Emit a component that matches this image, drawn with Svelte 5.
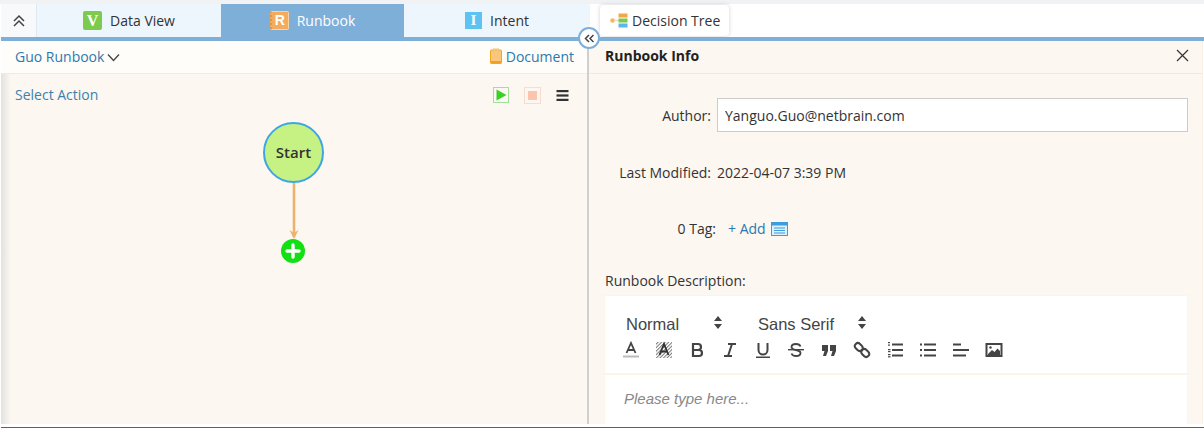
<script>
    const tabs = [
        { name: 'Data View', letter: 'V', kind: 'view', active: false },
        { name: 'Runbook', letter: 'R', kind: 'book', active: true },
        { name: 'Intent', letter: 'I', kind: 'intent', active: false },
    ];
</script>

<div class="page">
    <div class="topstrip"></div>
    <div class="tabbar">
        <div class="tabs-left">
            <button class="collapse" aria-label="collapse">
                <svg width="14" height="14" viewBox="0 0 14 14" fill="none" stroke="#444" stroke-width="1.5"><path d="M2 7l5-5 5 5M2 12l5-5 5 5" /></svg>
            </button>
            {#each tabs as tab}
                <div class="tab" class:active={tab.active}>
                    <span class="tab-icon {tab.kind}">{tab.letter}</span>
                    <span>{tab.name}</span>
                </div>
            {/each}
        </div>
        <div class="tabs-right">
            <div class="dtree">
                <svg width="18" height="15" viewBox="0 0 18 15">
                    <circle cx="2.500" cy="7.500" r="2.200" fill="#f8b45c" />
                    <path d="M5 7.500h4" stroke="#ddd" stroke-width="1.500" />
                    <rect x="8.500" y="0.500" width="9" height="4" fill="#f4a64a" />
                    <rect x="8.500" y="5.500" width="9" height="4" fill="#7ccb4c" />
                    <rect x="8.500" y="10.500" width="9" height="4" fill="#5cb6f0" />
                </svg>
                <span>Decision Tree</span>
            </div>
        </div>
    </div>

    <div class="body">
        <div class="left">
            <div class="left-head">
                <span class="rb-name">Guo Runbook</span>
                <svg class="chev" width="13" height="9" viewBox="0 0 13 9" fill="none" stroke="#444" stroke-width="1.3"><path d="M1 1.500l5.500 6 5.500-6" /></svg>
                <span class="doc">
                    <svg width="12" height="16" viewBox="0 0 12 16">
                        <rect x="0.500" y="2" width="11" height="13.500" rx="1" fill="#f8c77c" stroke="#f5a623" />
                        <rect x="3" y="0.500" width="6" height="3" fill="#f5c27a" />
                        <rect x="0.500" y="13" width="11" height="2.500" fill="#f5a020" />
                    </svg>
                    Document
                </span>
            </div>
            <div class="action-row">
                <span class="select-action">Select Action</span>
                <div class="actions">
                    <span class="play"><svg width="12" height="12" viewBox="0 0 12 12"><path d="M1.500 0.500L11.500 6 1.500 11.500z" fill="#3ccf2a" /></svg></span>
                    <span class="stop"><span></span></span>
                    <svg width="13" height="11" viewBox="0 0 13 11" fill="#333"><rect width="12" height="2.200" x="0.500" /><rect width="12" height="2.200" x="0.500" y="4.400" /><rect width="12" height="2.200" x="0.500" y="8.800" /></svg>
                </div>
            </div>
            <div class="canvas">
                <div class="start">Start</div>
                <svg class="link" width="12" height="57" viewBox="0 0 12 57">
                    <path d="M6 0V54" stroke="#edb36c" stroke-width="2.600" fill="none" />
                    <path d="M1.500 47L6 56 10.500 47 6 50z" fill="#edb36c" />
                </svg>
                <svg class="plus" width="24" height="24" viewBox="0 0 24 24">
                    <circle cx="12" cy="12" r="12" fill="#12e012" />
                    <path d="M12 6v12M6 12h12" stroke="#fff" stroke-width="3.400" stroke-linecap="round" />
                </svg>
            </div>
        </div>

        <div class="right">
            <div class="right-head">
                <span class="info-title">Runbook Info</span>
                <svg width="13" height="13" viewBox="0 0 13 13" stroke="#333" stroke-width="1.200"><path d="M1 1l11 11M12 1L1 12" /></svg>
            </div>
            <div class="form">
                <div class="row author">
                    <span class="lbl">Author:</span>
                    <input class="author-input" value="Yanguo.Guo@netbrain.com" />
                </div>
                <div class="row modified">
                    <span class="lbl">Last Modified:</span>
                    <span>2022-04-07 3:39 PM</span>
                </div>
                <div class="row tag">
                    <span class="lbl">0 Tag:</span>
                    <span class="add">+ Add</span>
                    <svg width="17" height="14" viewBox="0 0 17 14">
                        <rect x="0.500" y="0.500" width="16" height="13" fill="#dff0fb" stroke="#3d9be0" />
                        <rect x="0.500" y="0.500" width="16" height="3" fill="#3d9be0" />
                        <path d="M3 6h11M3 8.500h11M3 11h11" stroke="#3d9be0" stroke-width="1.200" />
                    </svg>
                </div>
                <div class="desc-label">Runbook Description:</div>
            </div>
            <div class="editor">
                <div class="toolbar">
                    <div class="selects">
                        <span class="sel sel-a">Normal</span>
                        <svg class="updown" width="8" height="13" viewBox="0 0 8 13" fill="#444"><path d="M4 0L8 5H0zM4 13L0 8h8z" /></svg>
                        <span class="sel sel-b">Sans Serif</span>
                        <svg class="updown" width="8" height="13" viewBox="0 0 8 13" fill="#444"><path d="M4 0L8 5H0zM4 13L0 8h8z" /></svg>
                    </div>
                    <div class="tools">
                        <svg width="18" height="18" viewBox="0 0 18 18"><path d="M4.500 12L9 2l4.500 10M6 9h6" fill="none" stroke="#444" stroke-width="1.800" /><rect x="1" y="14.500" width="16" height="2" fill="#bbb" /></svg>
                        <svg width="18" height="18" viewBox="0 0 18 18"><defs><pattern id="hatch" width="2.500" height="2.500" patternUnits="userSpaceOnUse" patternTransform="rotate(45)"><rect width="1" height="2.500" fill="#777" /></pattern></defs><rect x="1" y="1" width="16" height="16" fill="url(#hatch)" /><path d="M4.500 14L9 3l4.500 11M6 10.500h6" fill="none" stroke="#333" stroke-width="1.800" /></svg>
                        <svg width="18" height="18" viewBox="0 0 18 18"><path d="M5 3h5a3 3 0 0 1 0 6H5zM5 9h6a3 3 0 0 1 0 6H5z" fill="none" stroke="#444" stroke-width="2.200" /></svg>
                        <svg width="18" height="18" viewBox="0 0 18 18"><path d="M7 3h8M3 15h8M11 3L7 15" fill="none" stroke="#444" stroke-width="2" /></svg>
                        <svg width="18" height="18" viewBox="0 0 18 18"><path d="M4.500 2v7a4.500 4.500 0 0 0 9 0V2" fill="none" stroke="#444" stroke-width="2" /><rect x="2" y="15.500" width="14" height="1.500" fill="#444" /></svg>
                        <svg width="18" height="18" viewBox="0 0 18 18"><path d="M13.500 5.500C13 4 11 3 9 3 6.500 3 4.500 4.200 4.500 6c0 4 9 2 9 6 0 1.800-2 3-4.500 3-2 0-4-1-4.500-2.500" fill="none" stroke="#444" stroke-width="1.800" /><rect x="1" y="8" width="16" height="1.400" fill="#444" /></svg>
                        <svg width="18" height="18" viewBox="0 0 18 18" fill="#444"><path d="M2 4h6v6l-2 5H3l1.500-5H2zM10 4h6v6l-2 5h-3l1.500-5H10z" /></svg>
                        <svg width="18" height="18" viewBox="0 0 18 18" fill="none" stroke="#444" stroke-width="2"><rect x="1.500" y="3" width="8.500" height="6" rx="3" transform="rotate(45 5.750 6)" /><rect x="8" y="9" width="8.500" height="6" rx="3" transform="rotate(45 12.250 12)" /></svg>
                        <svg width="18" height="18" viewBox="0 0 18 18" fill="#444"><rect x="6" y="2.500" width="11" height="2" /><rect x="6" y="8" width="11" height="2" /><rect x="6" y="13.500" width="11" height="2" /><rect x="2" y="1" width="2" height="1.200" /><rect x="2" y="3.500" width="2" height="1.200" /><rect x="2" y="8" width="2.500" height="1.200" /><rect x="2" y="10" width="2.500" height="1.200" /><rect x="2" y="13" width="2.500" height="1.200" /><rect x="2" y="15.200" width="2.500" height="1.200" /></svg>
                        <svg width="18" height="18" viewBox="0 0 18 18" fill="#444"><rect x="5" y="2.500" width="12" height="2" /><rect x="5" y="8" width="12" height="2" /><rect x="5" y="13.500" width="12" height="2" /><rect x="1" y="2.500" width="2" height="2" /><rect x="1" y="8" width="2" height="2" /><rect x="1" y="13.500" width="2" height="2" /></svg>
                        <svg width="18" height="18" viewBox="0 0 18 18" fill="#444"><rect x="1" y="2.500" width="8" height="2" /><rect x="1" y="8" width="16" height="2" /><rect x="1" y="13.500" width="13" height="2" /></svg>
                        <svg width="18" height="18" viewBox="0 0 18 18"><rect x="1.500" y="3" width="15" height="12" fill="#fff" stroke="#444" stroke-width="2" /><path d="M3 13l4-4 2.500 2 3-3.500L15 10v4H3z" fill="#444" /><circle cx="5.500" cy="6.500" r="1.200" fill="#444" /></svg>
                    </div>
                </div>
                <div class="editor-body">Please type here...</div>
            </div>
        </div>

        <button class="fold" aria-label="fold">
            <svg width="11" height="9" viewBox="0 0 11 9" fill="none" stroke="#444" stroke-width="1.500"><path d="M5 1L1.500 4.500 5 8M9.500 1L6 4.500 9.500 8" /></svg>
        </button>
    </div>
    <div class="bottom-line"></div>
</div>

<style>
    :global(body) {
        margin: 0;
        background: #fff;
        font-family: "Open Sans", "Noto Sans", sans-serif;
        font-size: 14px;
        color: #333;
    }

    .page {
        width: 1204px;
        height: 430px;
        overflow: hidden;
    }

    .topstrip {
        height: 4px;
        background: #f0f2f4;
    }

    .tabbar {
        display: grid;
        grid-template-columns: 589px 1fr;
        height: 33px;
        padding-left: 1px;
    }

    .tabs-left {
        display: grid;
        grid-template-columns: 36px 184px 183px 1fr;
    }

    .collapse {
        display: flex;
        align-items: center;
        justify-content: center;
        border: none;
        border-right: 1px solid #dfe9f2;
        background: #f8f9fa;
        padding: 0;
    }

    .tab {
        display: flex;
        align-items: center;
        justify-content: center;
        gap: 8px;
        background: #edf5fd;
        color: #333;
    }

    .tab.active {
        background: #7eafd9;
        color: #fff;
    }

    .tab-icon {
        width: 19px;
        height: 19px;
        border-radius: 2px;
        color: #fff;
        text-align: center;
    }

    .tab-icon.view {
        background: #7ccb4c;
        font: bold 16px/19px "Liberation Serif", serif;
    }

    .tab-icon.book {
        background: #f4ac5c;
        border: 1px solid #fbd3a3;
        border-left: 2px dotted #d9974e;
        box-sizing: border-box;
        font: bold 14px/17px "Liberation Sans", sans-serif;
    }

    .tab-icon.intent {
        width: 17px;
        height: 17px;
        border-radius: 0;
        background: #5cc3f3;
        font: bold 15px/17px "Liberation Serif", serif;
    }

    .tabs-right {
        padding: 1px 0 1px 10px;
    }

    .dtree {
        display: inline-flex;
        align-items: center;
        gap: 4px;
        height: 31px;
        width: 129px;
        box-sizing: border-box;
        padding-left: 10px;
        background: #fff;
        border-radius: 4px;
        box-shadow: 0 0 4px rgba(0, 0, 0, 0.18);
        color: #333;
    }

    .body {
        position: relative;
        display: grid;
        grid-template-columns: 588px 1fr;
        height: 383px;
        border-top: 4px solid #7eafd9;
        margin-left: 1px;
    }

    .left {
        background: #fcf7f1;
        border-right: 2px solid #cfcfcf;
        display: flex;
        flex-direction: column;
        background-image: linear-gradient(90deg, #e4e2df, #fcf7f1 10px);
        width: 586px;
    }

    .left-head {
        display: flex;
        align-items: center;
        flex: none;
        padding: 0 13px 2px 14px;
        height: 30px;
        background: #fffdf9;
        border-bottom: 1px solid #fbe6cf;
        color: #2a7ab0;
    }

    .chev {
        margin: 3px 0 0 3px;
    }

    .doc {
        margin-left: auto;
        display: flex;
        align-items: center;
        gap: 4px;
    }

    .action-row {
        display: flex;
        align-items: center;
        justify-content: space-between;
        padding: 11px 18px 0 14px;
        color: #3b82b0;
    }

    .select-action {
        line-height: 20px;
    }

    .actions {
        display: flex;
        align-items: center;
        gap: 15px;
    }

    .play {
        display: flex;
        align-items: center;
        justify-content: center;
        width: 14px;
        height: 14px;
        border: 1px solid #9fe09a;
    }

    .stop {
        display: flex;
        align-items: center;
        justify-content: center;
        width: 15px;
        height: 15px;
        border: 1px solid #fbdccb;
    }

    .stop span {
        width: 9px;
        height: 9px;
        background: #fbc4ae;
    }

    .canvas {
        position: relative;
        flex: 1;
    }

    .start {
        position: absolute;
        left: 262px;
        top: 17px;
        width: 57px;
        height: 55px;
        padding-bottom: 2px;
        display: flex;
        align-items: center;
        justify-content: center;
        background: #c6f183;
        border: 2px solid #3ea6e4;
        border-radius: 50%;
        color: #333;
        font-weight: 600;
        font-size: 15px;
    }

    .link {
        position: absolute;
        left: 287px;
        top: 78px;
    }

    .plus {
        position: absolute;
        left: 280px;
        top: 134px;
    }

    .right {
        background: #fcf7f1;
        display: flex;
        flex-direction: column;
        margin-right: 1px;
        border-right: 1px solid #fcf0e2;
    }

    .right-head {
        display: flex;
        align-items: center;
        justify-content: space-between;
        height: 28px;
        flex: none;
        padding: 0 13px 4px 16px;
        border-bottom: 1px solid #fbe6cf;
    }

    .info-title {
        font-weight: 700;
        color: #222;
    }

    .form {
        padding-left: 16px;
    }

    .row {
        display: grid;
        grid-template-columns: 106px auto;
        column-gap: 6px;
        align-items: center;
        justify-content: start;
    }

    .lbl {
        text-align: right;
    }

    .author {
        margin-top: 24px;
    }

    .author-input {
        width: 471px;
        height: 34px;
        box-sizing: border-box;
        border: 1px solid #ccc;
        background: #fff;
        padding: 0 7px;
        font: inherit;
        color: #333;
    }

    .modified {
        margin-top: 31px;
    }

    .tag {
        grid-template-columns: 111px auto auto;
        margin-top: 37px;
        column-gap: 6px;
    }

    .tag svg {
        margin-left: -1px;
    }

    .tag .add {
        margin-left: 6px;
        color: #2a7ab0;
    }

    .desc-label {
        margin-top: 34px;
        line-height: 18px;
    }

    .editor {
        flex: 1;
        margin: 5px 14px 0 15px;
        background: #fff;
        border: 1px solid #fdf3e6;
        border-bottom: none;
        min-height: 0;
    }

    .toolbar {
        padding: 16px 0 0 18px;
        height: 79px;
        box-sizing: border-box;
        border-bottom: 2px solid #fdf3e6;
    }

    .selects {
        display: flex;
        align-items: center;
        font: 16.500px "Liberation Sans", Arial, sans-serif;
        color: #444;
        line-height: 22px;
        height: 24px;
    }

    .sel-a {
        width: 88px;
        padding-left: 3px;
    }

    .sel-b {
        margin-left: 36px;
        width: 100px;
    }

    .updown {
        margin-top: -4px;
    }

    .tools {
        display: flex;
        gap: 15px;
        margin-top: 5px;
        margin-left: -1px;
    }

    .editor-body {
        padding: 15px 18px 0 19px;
        font: italic 15px "Liberation Sans", Arial, sans-serif;
        color: #888;
    }

    .fold {
        position: absolute;
        left: 577px;
        top: -14px;
        width: 22px;
        height: 22px;
        padding: 0;
        display: flex;
        align-items: center;
        justify-content: center;
        background: #fff;
        border: 2px solid #7eafd9;
        border-radius: 50%;
    }

    .bottom-line {
        height: 1px;
        background: #1a75b8;
        margin-top: 3px;
        margin-left: 1px;
    }
</style>
